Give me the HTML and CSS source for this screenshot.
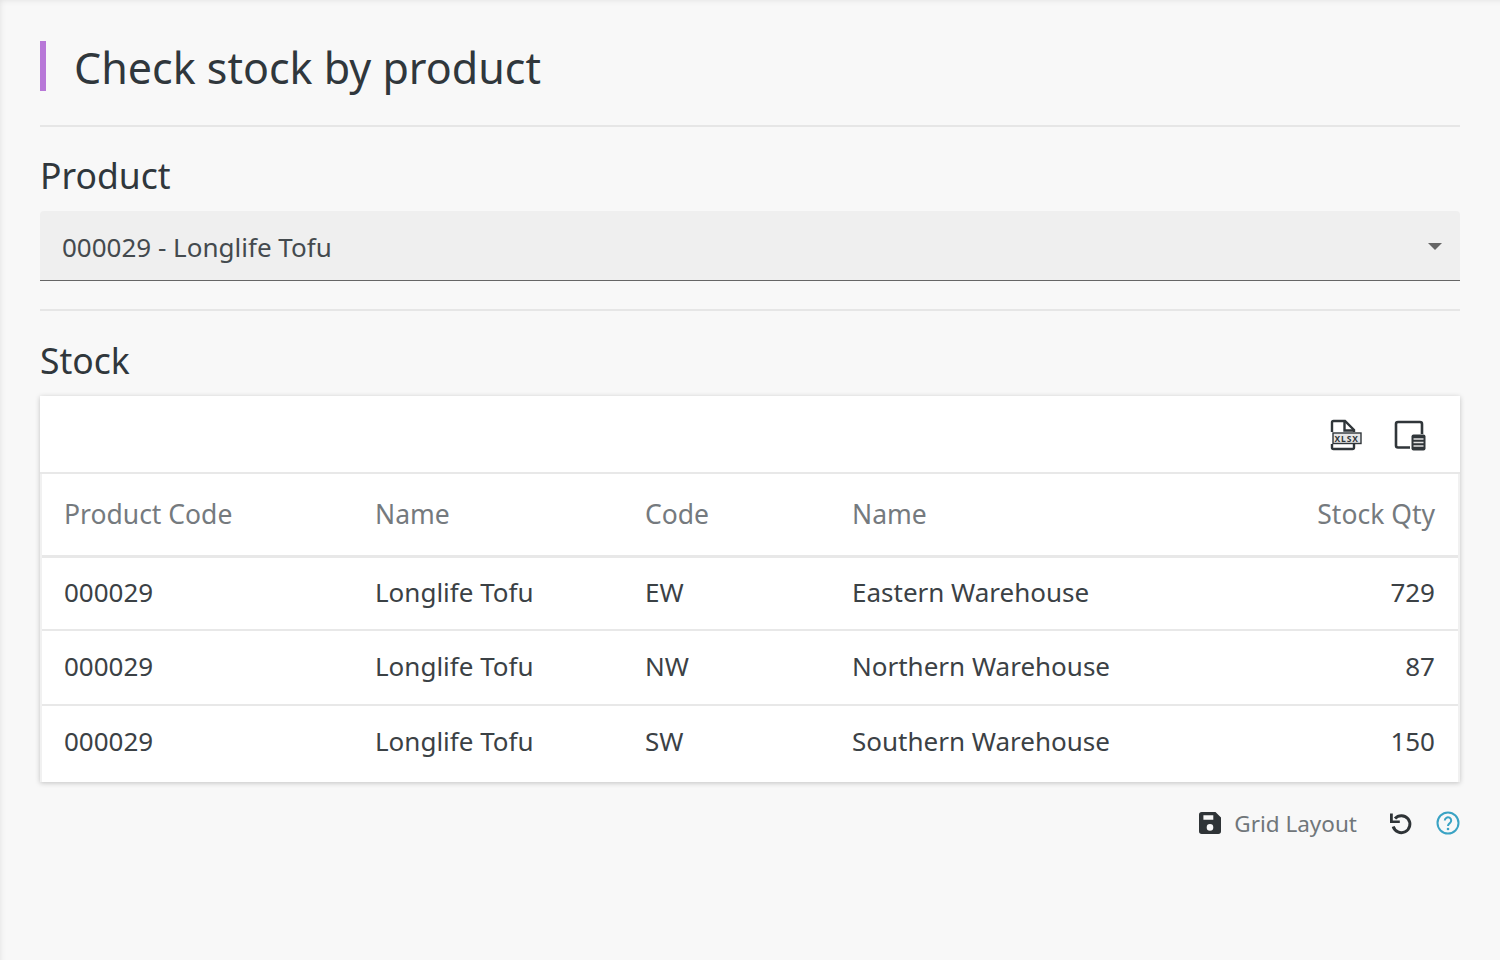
FILE: index.html
```html
<!DOCTYPE html>
<html lang="en">
<head>
<meta charset="utf-8">
<title>Check stock by product</title>
<link rel="stylesheet" href="styles.css">
</head>
<body>
<main class="page">
  <header class="title-row">
    <h1 class="title">Check stock by product</h1>
  </header>
  <hr class="rule rule-title">
  <h2 class="section">Product</h2>
  <div class="select">
    <span>000029 - Longlife Tofu</span>
    <span class="caret"></span>
  </div>
  <hr class="rule rule-select">
  <h2 class="section">Stock</h2>
  <section class="card">
    <div class="toolbar">
      <button class="tool" aria-label="Export XLSX">
        <svg width="32" height="32" viewBox="0 0 32 32" fill="none">
          <path d="M2 13V3.500A1.500 1.500 0 0 1 3.500 2H15l9 9v2M24 25v3.500a1.500 1.500 0 0 1-1.500 1.500h-19A1.500 1.500 0 0 1 2 28.500V25" stroke="#30363a" stroke-width="2.400"/>
          <path d="M14.500 2v9.500H24" stroke="#30363a" stroke-width="2.400"/>
          <rect x="3" y="14" width="28" height="10.500" fill="#e6e6e6" stroke="#30363a" stroke-width="1.400"/>
          <text x="4.500" y="22.500" class="xlsx">XLSX</text>
        </svg>
      </button>
      <button class="tool" aria-label="Column chooser">
        <svg width="32" height="32" viewBox="0 0 32 32" fill="none">
          <path d="M16 28.500H4A2 2 0 0 1 2 26.500V5A2 2 0 0 1 4 3h22a2 2 0 0 1 2 2v10" stroke="#30363a" stroke-width="2.600"/>
          <rect x="17.500" y="15.500" width="14" height="16" rx="2" fill="#30363a"/>
          <path d="M19.500 20h10M19.500 23.500h10M19.500 27h10" stroke="#e2e2e2" stroke-width="1.300"/>
        </svg>
      </button>
    </div>
    <div class="grid-wrap">
      <table class="grid">
        <thead>
          <tr class="head"><th class="c1">Product Code</th><th class="c2">Name</th><th class="c3">Code</th><th class="c4">Name</th><th class="num">Stock Qty</th></tr>
        </thead>
        <tbody>
          <tr class="r1"><td>000029</td><td>Longlife Tofu</td><td>EW</td><td>Eastern Warehouse</td><td class="num">729</td></tr>
          <tr class="r2"><td>000029</td><td>Longlife Tofu</td><td>NW</td><td>Northern Warehouse</td><td class="num">87</td></tr>
          <tr class="r3"><td>000029</td><td>Longlife Tofu</td><td>SW</td><td>Southern Warehouse</td><td class="num">150</td></tr>
        </tbody>
      </table>
    </div>
  </section>
  <footer class="foot">
    <svg class="save" width="22" height="22" viewBox="2 2 20 20"><path fill="#2f3437" d="M17 2H4.500A2.500 2.500 0 0 0 2 4.500v15A2.500 2.500 0 0 0 4.500 22h15a2.500 2.500 0 0 0 2.500-2.500V7zM6 5h9v4H6zm6 14a3 3 0 1 1 0-6 3 3 0 0 1 0 6z"/></svg>
    <span class="foot-label">Grid Layout</span>
    <svg class="undo" width="26" height="26" viewBox="0 0 26 26" fill="none"><path d="M8 8.500a8.500 8.500 0 1 1-1.800 8" stroke="#2f3437" stroke-width="3"/><path d="M3 3.500h2.800v7h7V13H3z" fill="#2f3437"/></svg>
    <svg class="help" width="24" height="24" viewBox="0 0 24 24" fill="none"><circle cx="12" cy="12" r="10.500" stroke="#3aa3c4" stroke-width="2"/><path d="M8.800 9.500a3.200 3.200 0 1 1 5 2.700c-1.200.8-1.800 1.300-1.800 2.800" stroke="#3aa3c4" stroke-width="2"/><circle cx="12" cy="18" r="1.300" fill="#3aa3c4"/></svg>
  </footer>
</main>
</body>
</html>
```
FILE: styles.css
```css
* { box-sizing: border-box; }
html, body { margin: 0; height: 960px; overflow: hidden; }
body {
  background: #f8f8f8;
  font-family: "Noto Sans", "Open Sans", sans-serif;
  color: #333a3f;
  box-shadow: inset 4px 4px 6px -4px rgba(0,0,0,.1);
}
.page { padding: 41px 40px 0; }
.title-row { border-left: 6px solid #b878d8; height: 50px; display: flex; align-items: center; padding-left: 28px; }
.title { margin: 0; padding-top: 4px; font-size: 43px; font-weight: 400; line-height: 50px; color: #30373c; }
.rule { margin: 0; border: 0; height: 2px; background: #e6e6e6; }
.rule-title { margin-top: 34px; }
.rule-select { margin-top: 28px; }
.section { margin: 0; padding-bottom: 2px; height: 52px; font-size: 35.500px; font-weight: 400; line-height: 50px; color: #30373c; }
.rule-title + .section { margin-top: 23px; margin-bottom: 9px; }
.rule-select + .section { margin-top: 24px; margin-bottom: 9px; }
.select {
  height: 70px; background: #efefef; border-bottom: 1px solid #666;
  border-radius: 4px 4px 0 0;
  display: flex; align-items: center; justify-content: space-between;
  padding: 2px 18px 0 22px; font-size: 26px; color: #444a4e;
}
.caret { width: 0; height: 0; border-left: 7px solid transparent; border-right: 7px solid transparent; border-top: 7px solid #666; }
.card { background: #fff; box-shadow: 0 1px 5px rgba(0,0,0,.22); height: 386px; }
.toolbar { height: 78px; display: flex; justify-content: flex-end; align-items: center; gap: 32px; padding: 2px 34px 0 0; border-bottom: 2px solid #e8e8e8; }
.tool { padding: 0; border: 0; background: none; width: 32px; height: 32px; }
.tool svg { display: block; }
.xlsx { font-family: "Noto Sans", sans-serif; font-size: 8.500px; font-weight: 700; fill: #30363a; letter-spacing: .9px; }
.grid-wrap { border-left: 2px solid #f1f1f1; border-right: 2px solid #f1f1f1; height: 308px; }
.grid { width: 100%; border-collapse: collapse; table-layout: fixed; font-size: 26px; }
.grid th, .grid td { padding: 0 0 0 22px; text-align: left; font-weight: 400; }
.grid .c1 { width: 311px; }
.grid .c2 { width: 270px; }
.grid .c3 { width: 207px; }
.grid .c4 { width: 331px; }
.grid .num { text-align: right; padding: 0 23px 0 0; }
.head { height: 82px; border-bottom: 3px solid #e8e8e8; }
.head th { color: #757a7e; font-size: 26.500px; }
.r1 { height: 74px; border-bottom: 2px solid #e8e8e8; }
.r2 { height: 75px; border-bottom: 2px solid #e8e8e8; }
.r3 { height: 76px; }
.grid .r1 td { padding-bottom: 2px; }
.grid .r2 td { padding-bottom: 4px; }
.grid .r3 td { padding-bottom: 6px; }
.grid td { color: #3b4145; }
.foot { display: flex; align-items: center; justify-content: flex-end; margin-top: 28px; height: 26px; }
.foot-label { font-size: 22.500px; color: #70767a; margin: 0 30px 0 13px; }
.undo { margin-right: 23px; }
```
